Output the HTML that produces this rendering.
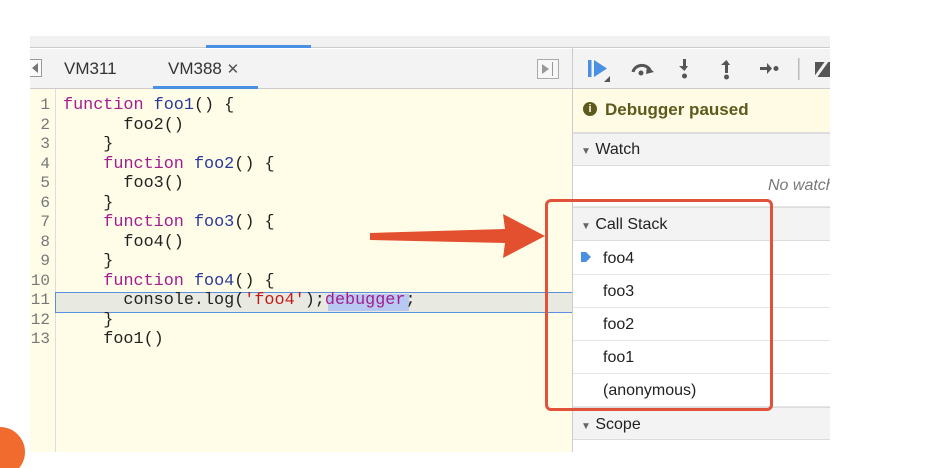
<!DOCTYPE html>
<html><head><meta charset="utf-8"><style>
*{margin:0;padding:0;box-sizing:border-box}
body{width:942px;height:468px;background:#fff;position:relative;overflow:hidden;font-family:"Liberation Sans",sans-serif}
.abs{position:absolute}
.code{font-family:"Liberation Mono",monospace;font-size:16.8px;line-height:19.5px;color:#222;white-space:pre}
.k{color:#a31d8f}.f{color:#2a3a9a}.s{color:#c41a16}
.ln{font-family:"Liberation Mono",monospace;font-size:16px;line-height:19.5px;color:#777;text-align:right;width:22px}
.row{position:absolute;left:573px;width:257px;border-bottom:1px solid #e6e6e6;font-size:16px;color:#222;padding-left:30px}
.hdr{background:#f3f3f3;border-bottom:1px solid #dcdcdc;border-top:1px solid #dcdcdc;padding-left:8px}
</style></head><body>
<!-- top bar -->
<div class="abs" style="left:30px;top:36px;width:800px;height:12px;background:#f1f1f1;border-bottom:1px solid #ccc"></div>
<div class="abs" style="left:206px;top:45px;width:105px;height:3px;background:#4a90e2"></div>
<!-- tab bar -->
<div class="abs" style="left:30px;top:49px;width:800px;height:40px;background:#f3f3f3;border-bottom:1px solid #ccc"></div>
<div class="abs" style="left:30px;top:59px;width:12px;height:18px;border:1px solid #999;border-left:none;background:#fafafa"></div>
<div class="abs" style="left:32px;top:63px;width:0;height:0;border-top:5px solid transparent;border-bottom:5px solid transparent;border-right:6px solid #777"></div>
<div class="abs" style="left:64px;top:59px;font-size:17px;color:#333">VM311</div>
<div class="abs" style="left:168px;top:59px;font-size:17px;color:#333">VM388 <span style="font-size:15px;color:#555">✕</span></div>
<div class="abs" style="left:153px;top:86px;width:105px;height:3px;background:#4a90e2"></div>
<div class="abs" style="left:537px;top:59px;width:22px;height:20px;border:1px solid #aaa;background:#f7f7f7"></div>
<div class="abs" style="left:542px;top:64px;width:0;height:0;border-top:5px solid transparent;border-bottom:5px solid transparent;border-left:7px solid #999"></div>
<div class="abs" style="left:552px;top:62px;width:1px;height:14px;background:#999"></div>
<!-- code area -->
<div class="abs" style="left:30px;top:89px;width:542px;height:363px;background:#fffde8"></div>
<div class="abs" style="left:55px;top:89px;width:1px;height:363px;background:#ddd"></div>
<div class="abs" style="left:55px;top:292px;width:517px;height:21px;background:#e8eae2;border:1px solid #5b8fe0;border-right:none"></div>
<div class="abs" style="left:328px;top:294px;width:81px;height:17px;background:#b8c8f0"></div>
<div class="abs ln" style="left:28px;top:96px">1<br>2<br>3<br>4<br>5<br>6<br>7<br>8<br>9<br>10<br>11<br>12<br>13</div>
<div class="abs code" style="left:63px;top:96px"><span class="k">function</span> <span class="f">foo1</span>() {
      foo2()
    }
    <span class="k">function</span> <span class="f">foo2</span>() {
      foo3()
    }
    <span class="k">function</span> <span class="f">foo3</span>() {
      foo4()
    }
    <span class="k">function</span> <span class="f">foo4</span>() {
      console.log(<span class="s">'foo4'</span>);<span class="k">debugger</span>;
    }
    foo1()</div>
<!-- right panel -->
<div class="abs" style="left:572px;top:48px;width:1px;height:404px;background:#ccc"></div>
<svg class="abs" style="left:580px;top:52px" width="250" height="34">
<rect x="8" y="8" width="3.5" height="17" fill="#4a90e2"/>
<path d="M14 8 L27 16.5 L14 25Z" fill="#4a90e2"/>
<path d="M24 30 L30 24 L30 30Z" fill="#555"/>
<path d="M53 20 A9 8 0 0 1 70 18" stroke="#555" stroke-width="3" fill="none"/>
<path d="M67 14 L74 20 L66 22Z" fill="#555"/><circle cx="61" cy="21" r="2.5" fill="#555"/>
<rect x="103" y="7" width="3" height="10" fill="#555"/><path d="M99 14 L108 14 L104.5 19Z" fill="#555"/><circle cx="104.5" cy="24" r="2.5" fill="#555"/>
<rect x="145" y="11" width="3" height="10" fill="#555"/><path d="M141 13 L150 13 L146.5 8Z" fill="#555"/><circle cx="146.5" cy="25" r="2.5" fill="#555"/>
<rect x="180" y="15" width="9" height="3" fill="#555"/><path d="M187 11 L192 16.5 L187 22Z" fill="#555"/><circle cx="196" cy="16.5" r="2.5" fill="#555"/>
<rect x="218" y="6" width="1.5" height="22" fill="#bbb"/>
<path d="M235 10 L250 10 L250 25 L235 25Z" fill="#555"/><path d="M232 30 L250 5" stroke="#f3f3f3" stroke-width="3"/>
</svg>
<div class="abs" style="left:573px;top:89px;width:257px;height:44px;background:#fffbe5;border-bottom:1px solid #ddd"></div>
<div class="abs" style="left:583px;top:102px;width:14px;height:14px;border-radius:50%;background:#5c5a1c;color:#fffbe5;font-size:11px;font-weight:bold;text-align:center;line-height:14px">i</div>
<div class="abs" style="left:605px;top:100px;font-size:17px;font-weight:bold;color:#5c5a1c">Debugger paused</div>
<div class="row hdr" style="top:133px;height:33px;line-height:32px;padding-left:8px"><span style="font-size:10px;color:#666">▼</span> Watch</div>
<div class="row" style="top:166px;height:41px;background:#fff;line-height:40px;text-align:right;padding-right:0;color:#777;font-style:italic;white-space:nowrap;overflow:hidden"><span style="position:absolute;left:195px">No watch</span></div>
<div class="row hdr" style="top:207px;height:34px;line-height:33px"><span style="font-size:10px;color:#666">▼</span> Call Stack</div>
<div class="row" style="top:241px;height:34px;line-height:35px">foo4</div>
<svg class="abs" style="left:580px;top:251px" width="12" height="12"><path d="M1 1 L6 1 L11 6 L6 11 L1 11Z" fill="#4a90e2"/></svg>
<div class="row" style="top:275px;height:33px;line-height:34px">foo3</div>
<div class="row" style="top:308px;height:33px;line-height:34px">foo2</div>
<div class="row" style="top:341px;height:33px;line-height:34px">foo1</div>
<div class="row" style="top:374px;height:33px;line-height:34px">(anonymous)</div>
<div class="row hdr" style="top:407px;height:33px;line-height:33px"><span style="font-size:10px;color:#666">▼</span> Scope</div>
<div class="abs" style="left:573px;top:440px;width:257px;height:12px;background:#fff"></div>
<!-- red box -->
<div class="abs" style="left:545px;top:199px;width:228px;height:212px;border:3px solid #e0533a;border-radius:6px"></div>
<!-- arrow -->
<svg class="abs" style="left:0;top:0" width="942" height="468">
<path d="M370 233 L505 229 L503 214 L545 236 L503 258 L505 243 L370 240Z" fill="#e2502f"/>
<circle cx="0" cy="452" r="25" fill="#f26b2e"/>
</svg>
</body></html>
